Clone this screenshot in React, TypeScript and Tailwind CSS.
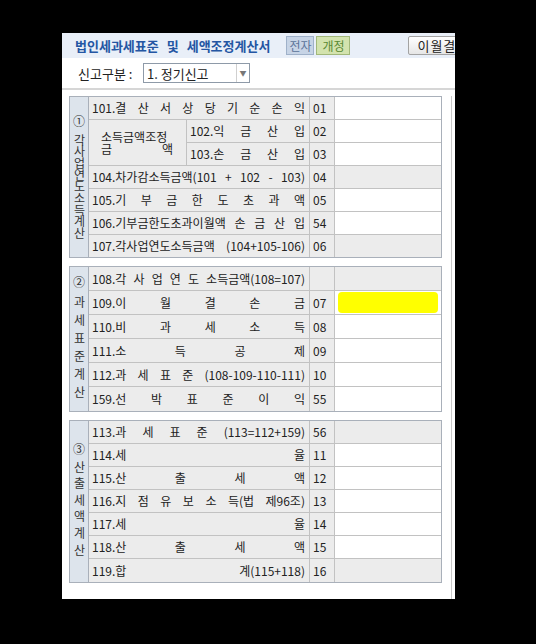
import clsx from "clsx";

type Row = { parts: string[]; code: string; shade?: boolean; mark?: boolean };

type Section = {
  num: string;
  side: string;
  gap: string;
  track: string;
  rowH: string;
  rows: Row[];
};

const s1Top: Row = { parts: ["101.결", "산", "서", "상", "당", "기", "순", "손", "익"], code: "01" };
const s1Sub: Row[] = [
  { parts: ["102.익", "금", "산", "입"], code: "02" },
  { parts: ["103.손", "금", "산", "입"], code: "03" },
];
const s1Rest: Row[] = [
  { parts: ["104.차가감소득금액(101", "+", "102", "-", "103)"], code: "04", shade: true },
  { parts: ["105.기", "부", "금", "한", "도", "초", "과", "액"], code: "05" },
  { parts: ["106.기부금한도초과이월액", "손", "금", "산", "입"], code: "54" },
  { parts: ["107.각사업연도소득금액", "(104+105-106)"], code: "06", shade: true },
];

const sections: Section[] = [
  {
    num: "②",
    side: "과세표준계산",
    gap: "mt-[7px]",
    track: "tracking-[6px]",
    rowH: "h-[24px]",
    rows: [
      { parts: ["108.각", "사", "업", "연", "도", "소득금액(108=107)"], code: "", shade: true },
      { parts: ["109.이", "월", "결", "손", "금"], code: "07", mark: true },
      { parts: ["110.비", "과", "세", "소", "득"], code: "08" },
      { parts: ["111.소", "득", "공", "제"], code: "09" },
      { parts: ["112.과", "세", "표", "준", "(108-109-110-111)"], code: "10" },
      { parts: ["159.선", "박", "표", "준", "이", "익"], code: "55" },
    ],
  },
  {
    num: "③",
    side: "산출세액계산",
    gap: "mt-[5px]",
    track: "tracking-[4.6px]",
    rowH: "h-[23px]",
    rows: [
      { parts: ["113.과", "세", "표", "준", "(113=112+159)"], code: "56", shade: true },
      { parts: ["114.세", "율"], code: "11" },
      { parts: ["115.산", "출", "세", "액"], code: "12" },
      { parts: ["116.지", "점", "유", "보", "소", "득(법", "제96조)"], code: "13" },
      { parts: ["117.세", "율"], code: "14" },
      { parts: ["118.산", "출", "세", "액"], code: "15" },
      { parts: ["119.합", "계(115+118)"], code: "16", shade: true },
    ],
  },
];

function Spread({ parts }: { parts: string[] }) {
  return (
    <div className="flex w-full justify-between whitespace-nowrap">
      {parts.map((p, i) => (
        <span key={i}>{p}</span>
      ))}
    </div>
  );
}

function Cells({ row, labelW }: { row: Row; labelW: string }) {
  return (
    <>
      <div className={clsx(labelW, "flex shrink-0 items-center border-r border-[#c2c2c2] bg-[#ececec] pl-[3px] pr-[4px]")}>
        <Spread parts={row.parts} />
      </div>
      <div className="flex w-[25px] shrink-0 items-center border-r border-[#c2c2c2] bg-[#ececec] pl-[3px]">
        {row.code}
      </div>
      <div className={clsx("flex flex-1 items-center", row.shade ? "bg-[#ececec]" : "bg-white")}>
        {row.mark && <div className="mx-[3px] h-[21px] w-full rounded-[4px] bg-[#ffff00]" />}
      </div>
    </>
  );
}

// vertical caption in the left column of each block
function SideLabel({ num, text, gap, track }: { num: string; text: string; gap: string; track: string }) {
  return (
    <div className="flex w-[19px] shrink-0 flex-col items-center justify-center border-r border-[#a9b0ba] bg-[#dde4ec] text-[12px] text-[#333]">
      <span className="leading-[14px]">{num}</span>
      <span className={clsx("leading-[16px] [writing-mode:vertical-rl]", gap, track)}>{text}</span>
    </div>
  );
}

export default function App() {
  return (
    <div className="h-[644px] w-[536px] bg-black pl-[62px] pt-[33px] font-['Noto_Sans_CJK_KR','Noto_Sans',sans-serif] text-[12px] leading-none text-[#222]">
      <div className="flex h-[566px] w-[393px] flex-col overflow-hidden bg-white">
        {/* title bar */}
        <div className="flex h-[25px] shrink-0 items-center bg-[#e9eff8] pl-[13px]">
          <div className="flex shrink-0 gap-[8px] text-[13px] font-bold text-[#2456a3]">
            <span>법인세과세표준</span>
            <span>및</span>
            <span>세액조정계산서</span>
          </div>
          <div className="ml-[16px] flex h-[19px] w-[28px] shrink-0 items-center justify-center border border-[#9fb1c9] bg-[#c7d4e6] text-[12px] text-[#5b7399]">
            전자
          </div>
          <div className="ml-[2px] flex h-[19px] w-[34px] shrink-0 items-center justify-center border border-[#a2b87a] bg-[#d3e3ae] text-[12px] text-[#5a8a34]">
            개정
          </div>
          <div className="ml-[58px] flex h-[19px] w-[60px] shrink-0 items-center rounded-[2px] border border-[#a3a3a3] bg-gradient-to-b from-white to-[#e6e6e6] pl-[8px] text-[13px] tracking-[1px] text-[#222]">
            이월결
          </div>
        </div>

        {/* 신고구분 */}
        <div className="flex h-[30px] shrink-0 items-center pl-[16px] text-[13px]">
          <span className="w-[65px]">신고구분 :</span>
          <div className="flex h-[20px] w-[107px] border border-[#8e9aa8] bg-white">
            <span className="flex flex-1 items-center pl-[3px]">1. 정기신고</span>
            <span className="flex w-[13px] items-center justify-center border-l border-[#d0d0d0] text-[7px] text-[#777]">
              ▼
            </span>
          </div>
        </div>
        <div className="h-[2px] shrink-0 bg-[#d6d6d6]" />

        {/* table area */}
        <div className="flex flex-1 pt-[6px]">
          <div className="w-[390px] border-r border-[#c8c8c8] pl-[7px]">
            {/* section 1 */}
            <div className="flex w-[373px] border border-[#a9b0ba]">
              <SideLabel num="①" text="각사업연도소득계산" gap="mt-[6px]" track="tracking-[-0.3px]" />
              <div className="flex flex-1 flex-col">
                <div className="flex h-[23px] border-b border-[#c2c2c2]">
                  <Cells row={s1Top} labelW="w-[221px]" />
                </div>
                <div className="flex h-[46px] border-b border-[#c2c2c2]">
                  <div className="flex w-[98px] shrink-0 items-center border-r border-[#c2c2c2] bg-[#ececec] pl-[12px] pr-[13px]">
                    <p className="w-full break-keep text-justify leading-[12px] [text-align-last:justify]">
                      소득금액조정 금 액
                    </p>
                  </div>
                  <div className="flex flex-1 flex-col">
                    <div className="flex h-[23px] border-b border-[#c2c2c2]">
                      <Cells row={s1Sub[0]} labelW="w-[123px]" />
                    </div>
                    <div className="flex h-[22px]">
                      <Cells row={s1Sub[1]} labelW="w-[123px]" />
                    </div>
                  </div>
                </div>
                {s1Rest.map((r) => (
                  <div key={r.code} className="flex h-[23px] border-b border-[#c2c2c2] last:h-[22px] last:border-b-0">
                    <Cells row={r} labelW="w-[221px]" />
                  </div>
                ))}
              </div>
            </div>

            {sections.map((s) => (
              <div key={s.num} className="mt-[8px] flex w-[373px] border border-[#a9b0ba]">
                <SideLabel num={s.num} text={s.side} gap={s.gap} track={s.track} />
                <div className="flex flex-1 flex-col">
                  {s.rows.map((r, i) => (
                    <div
                      key={i}
                      className={clsx("flex border-b border-[#c2c2c2] last:border-b-0", s.rowH)}
                    >
                      <Cells row={r} labelW="w-[221px]" />
                    </div>
                  ))}
                </div>
              </div>
            ))}
          </div>
        </div>
      </div>
    </div>
  );
}
